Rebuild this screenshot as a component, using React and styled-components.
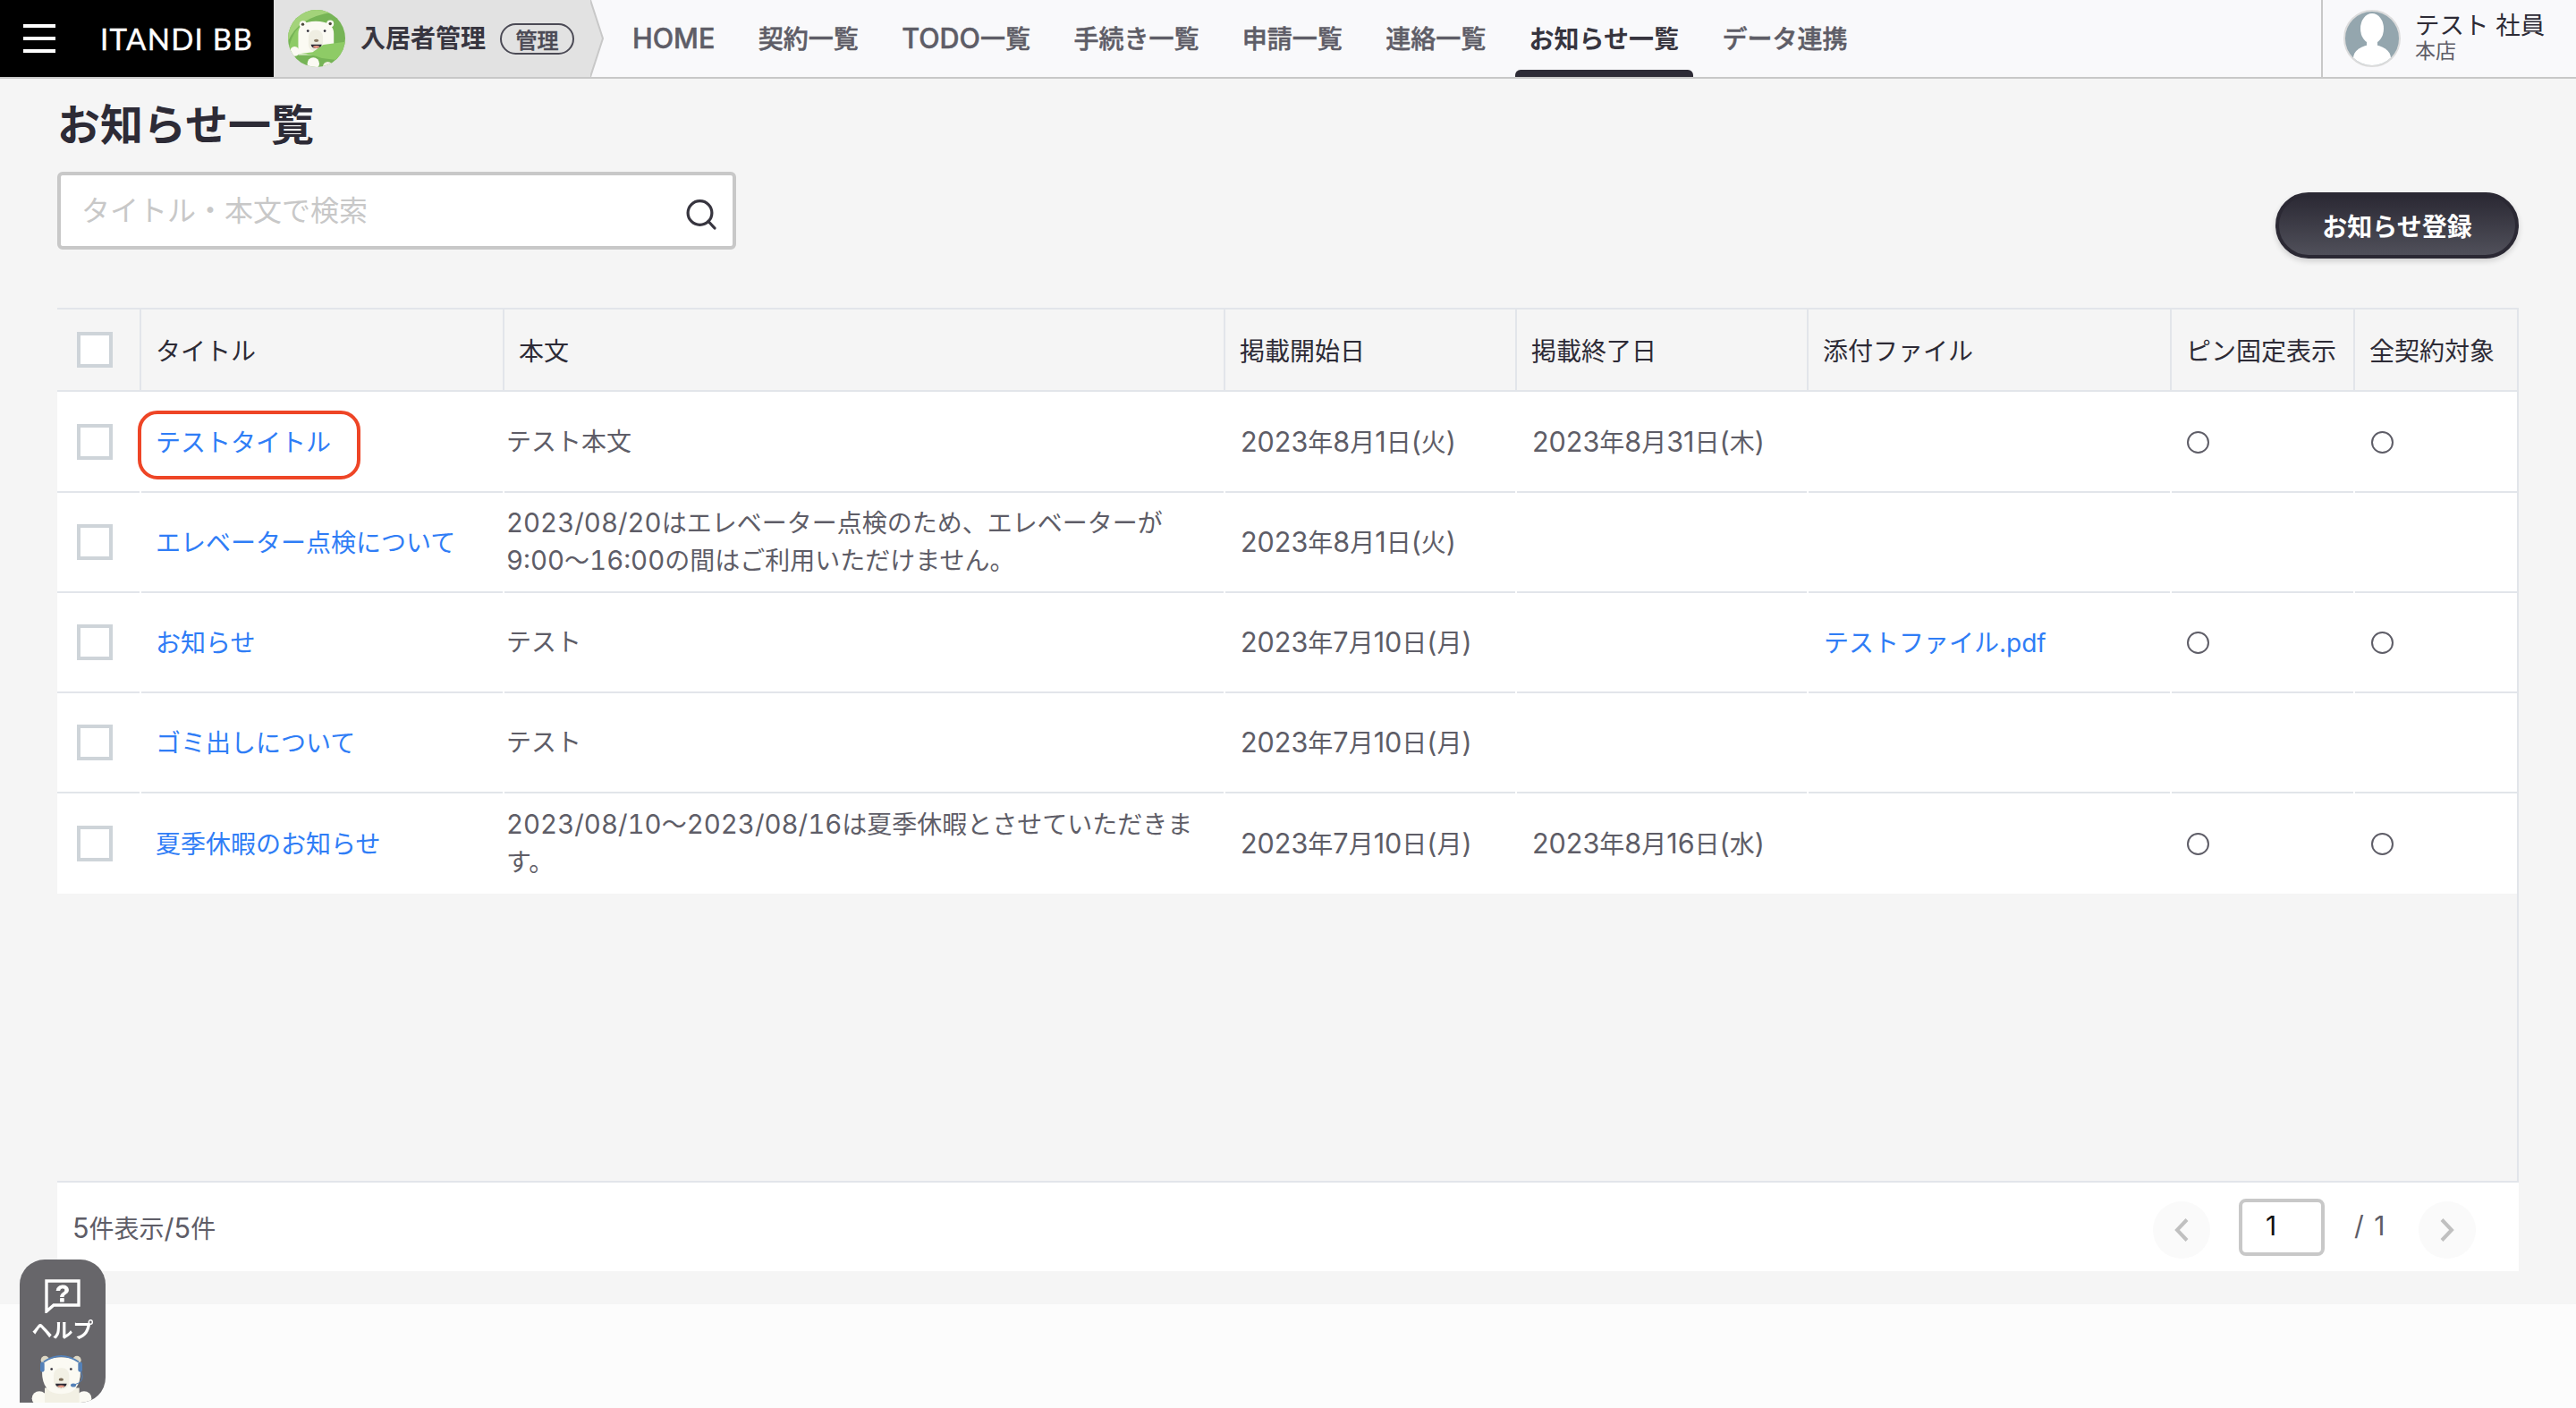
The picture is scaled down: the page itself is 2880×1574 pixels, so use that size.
import React from "react";
import styled, { createGlobalStyle } from "styled-components";

const JP = `"Inter", "Noto Sans CJK JP", "Liberation Sans", sans-serif`;
const LINE = "#e2e5ea";
const TEXT = "#2d2b36";
const SUB = "#5e5d67";
const LINK = "#2f7df6";
const COLUMNS = "92px 404px 804px 324px 324px 404px 203px 181px";

const GlobalStyle = createGlobalStyle`
html, body, #root {
  padding: 0;
  margin: 0;
  box-sizing: border-box;
  height: 100%;
}
body {
  background: #fcfcfc;
  font-family: ${JP};
  color: ${TEXT};
}
`;

const Page = styled.div`
  display: flex;
  flex-direction: column;
  height: 1574px;
  overflow: hidden;
`;

const Header = styled.header`
  display: flex;
  align-items: stretch;
  height: 88px;
  flex: none;
  box-sizing: border-box;
  background: #f9f9fb;
  border-bottom: 2px solid #c8c8c8;
`;

const Brand = styled.div`
  display: flex;
  align-items: center;
  width: 306px;
  background: #000;
  padding-left: 26px;
  box-sizing: border-box;
`;

const Burger = styled.div`
  display: flex;
  flex-direction: column;
  justify-content: space-between;
  width: 36px;
  height: 32px;
  margin-right: 50px;
  span {
    display: block;
    height: 4px;
    background: #fff;
  }
`;

const BrandName = styled.div`
  font-family: "Lato", sans-serif;
  font-weight: 400;
  font-size: 33px;
  letter-spacing: 1.3px;
  -webkit-text-stroke: 0.4px #fff;
  color: #fff;
  white-space: nowrap;
`;

const Product = styled.div`
  display: flex;
  align-items: center;
  width: 354px;
  box-sizing: border-box;
  padding-left: 16px;
  background: #e2e2e2;
`;

const ProductName = styled.div`
  margin-left: 17px;
  font-size: 28px;
  font-weight: 700;
  line-height: 36px;
  color: #37353f;
  white-space: nowrap;
`;

const RoleBadge = styled.div`
  display: flex;
  align-items: center;
  justify-content: center;
  margin-left: 16px;
  width: 83px;
  height: 35px;
  box-sizing: border-box;
  border: 2px solid #4b4a55;
  border-radius: 18px;
  font-size: 24px;
  font-weight: 500;
  -webkit-text-stroke: 0.5px #4b4a55;
  color: #4b4a55;
`;

const Nav = styled.nav`
  display: flex;
  gap: 16.4px;
  margin-left: 15px;
`;

const NavItem = styled.a`
  position: relative;
  display: flex;
  align-items: center;
  padding: 0 16px 2px;
  font-size: 28px;
  font-weight: ${(p) => (p.$active ? 700 : 500)};
  -webkit-text-stroke: ${(p) => (p.$active ? "0" : `0.5px ${SUB}`)};
  color: ${(p) => (p.$active ? "#37353f" : SUB)};
  white-space: nowrap;
  &::after {
    content: "";
    display: ${(p) => (p.$active ? "block" : "none")};
    position: absolute;
    left: 0;
    right: 0;
    bottom: 0;
    height: 8px;
    border-radius: 6px 6px 0 0;
    background: #2d2b36;
  }
`;

const Latin = styled.span`
  font-size: 1.09em;
`;

const Account = styled.div`
  display: flex;
  align-items: center;
  gap: 16px;
  margin-left: auto;
  width: 285px;
  box-sizing: border-box;
  padding-left: 23px;
  border-left: 2px solid #c8c8c8;
`;

const AccountText = styled.div`
  display: flex;
  flex-direction: column;
  margin-top: -4px;
`;

const AccountName = styled.div`
  font-size: 27.5px;
  line-height: 32px;
  color: ${TEXT};
  white-space: pre;
`;

const AccountShop = styled.div`
  font-size: 23px;
  line-height: 26px;
  color: ${SUB};
`;

const Main = styled.main`
  display: flex;
  flex-direction: column;
  height: 1370px;
  flex: none;
  box-sizing: border-box;
  padding: 23px 64px 37px;
  background: #f5f5f5;
`;

const Title = styled.h1`
  margin: 0 0 23px;
  font-size: 48px;
  line-height: 58px;
  font-weight: 700;
  color: ${TEXT};
`;

const Toolbar = styled.div`
  display: flex;
  justify-content: space-between;
  align-items: flex-start;
  height: 97px;
  margin-bottom: 55px;
`;

const SearchBox = styled.div`
  display: flex;
  align-items: center;
  justify-content: space-between;
  width: 759px;
  height: 87px;
  box-sizing: border-box;
  padding: 0 18px 0 23px;
  background: #fff;
  border: 4px solid #c8c8c8;
  border-radius: 6px;
`;

const SearchInput = styled.input`
  flex: 1;
  min-width: 0;
  padding: 0 0 1px;
  border: 0;
  outline: 0;
  background: transparent;
  font-family: ${JP};
  font-size: 32px;
  color: ${TEXT};
  &::placeholder {
    color: #c8c8c8;
    opacity: 1;
  }
`;

const PrimaryButton = styled.button`
  width: 272px;
  height: 74px;
  margin-top: 23px;
  box-sizing: border-box;
  border: 4px solid #2b2934;
  border-radius: 37px;
  background: linear-gradient(#2b2934, #50505a);
  box-shadow: 0 3px 6px rgba(0, 0, 0, 0.16);
  font-family: ${JP};
  font-size: 28px;
  font-weight: 700;
  color: #fff;
`;

const TableArea = styled.div`
  flex: 1;
  box-sizing: border-box;
  border-top: 2px solid ${LINE};
  border-right: 2px solid ${LINE};
`;

const HeadRow = styled.div`
  display: grid;
  grid-template-columns: ${COLUMNS};
  column-gap: 2px;
  height: 92px;
  box-sizing: border-box;
  padding-bottom: 2px;
  background: ${LINE};
`;

const HeadCell = styled.div`
  display: flex;
  align-items: center;
  padding-left: ${(p) => p.$pad ?? 16}px;
  background: #f5f5f5;
  font-size: 28px;
  color: ${TEXT};
  white-space: nowrap;
`;

const TableBody = styled.div`
  padding-top: 1px;
  background: #fff;
`;

const BodyRow = styled.div`
  display: grid;
  grid-template-columns: ${COLUMNS};
  column-gap: 2px;
  height: 112px;
  background: #fff;
`;

const BodyCell = styled.div`
  position: relative;
  display: flex;
  align-items: center;
  box-sizing: border-box;
  padding-left: ${(p) => p.$pad ?? 17}px;
  border-bottom: ${(p) => (p.$last ? "0" : `2px solid ${LINE}`)};
  font-size: 28px;
  line-height: 42px;
  color: ${SUB};
`;

const BodyLine = styled.div`
  font-variant-numeric: tabular-nums;
  white-space: nowrap;
  ${Latin} {
    font-size: 1.05em;
  }
`;

const CheckBox = styled.span`
  display: block;
  width: 40px;
  height: 40px;
  box-sizing: border-box;
  background: #fff;
  border: 4px solid #ced4d9;
`;

const Link = styled.a`
  display: inline-block;
  padding-top: 2px;
  color: ${LINK};
  white-space: nowrap;
`;

const Highlight = styled.div`
  position: absolute;
  left: -4px;
  top: 20px;
  width: 249px;
  height: 77px;
  box-sizing: border-box;
  border: 4px solid #ee4526;
  border-radius: 22px;
  pointer-events: none;
`;

const Radio = styled.span`
  display: block;
  width: 25px;
  height: 25px;
  box-sizing: border-box;
  border: 2px solid ${SUB};
  border-radius: 50%;
`;

const TableFooter = styled.div`
  display: flex;
  align-items: center;
  justify-content: space-between;
  height: 101px;
  flex: none;
  box-sizing: border-box;
  padding: 0 48px 0 17px;
  background: #fff;
  border-top: 2px solid ${LINE};
  font-size: 28px;
  color: ${SUB};
`;

const Pager = styled.div`
  display: flex;
  align-items: center;
`;

const PageButton = styled.button`
  display: flex;
  align-items: center;
  justify-content: center;
  width: 64px;
  height: 64px;
  padding: 0;
  margin-top: 6px;
  border: 0;
  border-radius: 50%;
  background: #fafafa;
`;

const PageInput = styled.div`
  width: 96px;
  height: 64px;
  margin-left: 32px;
  box-sizing: border-box;
  padding-left: 26px;
  border: 4px solid #c8c8c8;
  border-radius: 8px;
  font-size: 30px;
  line-height: 52px;
  color: #111;
`;

const PageTotal = styled.div`
  width: 105px;
  padding: 0 0 4px 33px;
  box-sizing: border-box;
  font-size: 30px;
  word-spacing: 3px;
  white-space: pre;
`;

const HelpTab = styled.div`
  position: fixed;
  left: 22px;
  top: 1408px;
  display: flex;
  flex-direction: column;
  align-items: center;
  width: 96px;
  height: 160px;
  box-sizing: border-box;
  padding-top: 22px;
  overflow: hidden;
  border-radius: 28px 28px 28px 0;
  background: rgba(94, 92, 97, 0.94);
`;

const HelpLabel = styled.div`
  margin-top: 6px;
  font-size: 23px;
  font-weight: 700;
  line-height: 26px;
  color: #fff;
  white-space: nowrap;
`;

const HelpBear = styled.svg`
  margin-top: auto;
  display: block;
  flex: none;
`;

const IconSlot = styled.span`
  display: flex;
  flex: none;
  margin-top: 8px;
`;

// digits and capitals sit larger next to the kana in the reference font
const withLatin = (text) =>
  text.split(/([0-9A-Z/:()]+)/).map((part, i) => (i % 2 ? <Latin key={i}>{part}</Latin> : part));

const AppLogo = () => (
  <svg width="64" height="64" viewBox="38 30 190 190">
    <defs>
      <clipPath id="logo-clip">
        <circle cx="133" cy="125" r="95" />
      </clipPath>
    </defs>
    <g clipPath="url(#logo-clip)">
      <rect x="38" y="30" width="190" height="190" fill="#76b456" />
      <path d="M38 135 Q70 55 185 38 L130 20 L30 60Z" fill="#a3d37a" />
      <path d="M38 170 Q50 100 90 75 L70 170Z" fill="#8ecb66" />
      <path d="M72 110 Q72 68 130 68 Q190 68 190 110 L190 180 L72 180Z" fill="#fbfaf3" />
      <circle cx="88" cy="78" r="12" fill="#fbfaf3" />
      <circle cx="178" cy="76" r="12" fill="#fbfaf3" />
      <circle cx="87" cy="78" r="5" fill="#4c4a3c" />
      <circle cx="178" cy="76" r="5" fill="#4c4a3c" />
      <circle cx="104" cy="100" r="4" fill="#2d2b36" />
      <circle cx="160" cy="100" r="4" fill="#2d2b36" />
      <rect x="106" y="97" width="48" height="70" rx="22" fill="#efeee2" />
      <ellipse cx="132" cy="132" rx="8" ry="5" fill="#8a7b66" />
      <path d="M114 145 H150 Q148 158 132 158 Q116 158 114 145Z" fill="#2d2b36" />
      <path d="M120 152 Q132 146 144 152 Q140 158 132 158 Q124 158 120 152Z" fill="#e89a86" />
      <path d="M155 146 L228 136 L228 200 L150 190 Q100 172 62 178 L120 170Z" fill="#8ecb66" />
      <circle cx="60" cy="168" r="16" fill="#fbfaf3" />
      <circle cx="122" cy="208" r="20" fill="#fbfaf3" />
      <circle cx="170" cy="218" r="16" fill="#efeee2" />
    </g>
  </svg>
);

const ProductArrow = () => (
  <svg width="16" height="86" viewBox="0 0 16 86" style={{ flex: "none" }}>
    <polygon points="0,0 14,43 0,86" fill="#e2e2e2" />
    <polyline points="0,0 14,43 0,86" fill="none" stroke="#c8c8c8" strokeWidth="2" />
  </svg>
);

const Avatar = () => (
  <svg width="64" height="64" viewBox="0 0 64 64">
    <defs>
      <clipPath id="avatar-clip">
        <circle cx="32" cy="32" r="30" />
      </clipPath>
    </defs>
    <circle cx="32" cy="32" r="31" fill="#94a6ae" stroke="#dcdcdc" strokeWidth="2" />
    <g clipPath="url(#avatar-clip)" fill="#fff">
      <ellipse cx="32" cy="21" rx="13" ry="17" />
      <rect x="26" y="30" width="12" height="14" />
      <ellipse cx="32" cy="54" rx="21" ry="15" />
    </g>
  </svg>
);

const SearchIcon = () => (
  <IconSlot>
    <svg width="34" height="34" viewBox="0 0 34 34" fill="none" stroke="#37353f" strokeWidth="3.2">
      <circle cx="15.5" cy="15" r="13.4" />
      <path d="M25 24.5 L32 32" strokeLinecap="round" />
    </svg>
  </IconSlot>
);

const Chevron = ({ left }) => (
  <svg width="16" height="26" viewBox="0 0 16 26" fill="none" stroke="#c0c0c0" strokeWidth="4">
    <polyline points={left ? "14,1.5 3,13 14,24.5" : "2,1.5 13,13 2,24.5"} />
  </svg>
);

const HelpIcon = () => (
  <svg width="40" height="38" viewBox="0 0 40 38" style={{ flex: "none" }}>
    <path d="M2 2 H38 V29 H10 L2 36 Z" fill="none" stroke="#fff" strokeWidth="3.4" />
    <text
      x="20"
      y="25"
      textAnchor="middle"
      fontFamily={`"Liberation Sans", sans-serif`}
      fontWeight="700"
      fontSize="26"
      stroke="#fff"
      strokeWidth="0.8"
      fill="#fff"
    >
      ?
    </text>
  </svg>
);

const Bear = () => (
  <HelpBear width="96" height="55" viewBox="66 640 288 164">
    <ellipse cx="132" cy="790" rx="25" ry="24" fill="#fbfaf3" />
    <ellipse cx="282" cy="790" rx="25" ry="24" fill="#fbfaf3" />
    <rect x="150" y="755" width="116" height="60" fill="#f2f0e4" />
    <circle cx="151" cy="662" r="14" fill="#dfd9c5" />
    <circle cx="258" cy="662" r="14" fill="#dfd9c5" />
    <path d="M141 700 Q141 652 205 652 Q270 652 270 700 Q270 775 205 775 Q141 775 141 700Z" fill="#fbfaf3" />
    <path d="M146 668 Q205 628 264 668" fill="none" stroke="#5481b8" strokeWidth="5" />
    <rect x="135" y="668" width="14" height="34" rx="7" fill="#5481b8" />
    <rect x="262" y="668" width="14" height="34" rx="7" fill="#5481b8" />
    <path d="M272 700 Q288 735 248 745" fill="none" stroke="#5481b8" strokeWidth="3" />
    <ellipse cx="246" cy="746" rx="9" ry="6" fill="#5481b8" />
    <circle cx="173" cy="692" r="4" fill="#2d2b36" />
    <circle cx="238" cy="692" r="4" fill="#2d2b36" />
    <rect x="180" y="688" width="52" height="72" rx="24" fill="#f2f0e4" />
    <ellipse cx="205" cy="727" rx="8" ry="5" fill="#7a6a55" />
    <path d="M186 741 H224 Q222 754 205 754 Q188 754 186 741Z" fill="#2d2b36" />
    <path d="M192 749 Q205 743 218 749 Q213 754 205 754 Q197 754 192 749Z" fill="#e89a86" />
  </HelpBear>
);

const NAV_ITEMS = ["HOME", "契約一覧", "TODO一覧", "手続き一覧", "申請一覧", "連絡一覧", "お知らせ一覧", "データ連携"];

const HEADS = ["タイトル", "本文", "掲載開始日", "掲載終了日", "添付ファイル", "ピン固定表示", "全契約対象"];

const ROWS = [
  { title: "テストタイトル", body: ["テスト本文"], start: "2023年8月1日(火)", end: "2023年8月31日(木)", flags: true, marked: true },
  {
    title: "エレベーター点検について",
    body: ["2023/08/20はエレベーター点検のため、エレベーターが", "9:00〜16:00の間はご利用いただけません。"],
    start: "2023年8月1日(火)",
  },
  { title: "お知らせ", body: ["テスト"], start: "2023年7月10日(月)", file: "テストファイル.pdf", flags: true },
  { title: "ゴミ出しについて", body: ["テスト"], start: "2023年7月10日(月)" },
  {
    title: "夏季休暇のお知らせ",
    body: ["2023/08/10〜2023/08/16は夏季休暇とさせていただきま", "す。"],
    start: "2023年7月10日(月)",
    end: "2023年8月16日(水)",
    flags: true,
  },
];

const App = () => {
  return (
    <Page>
      <GlobalStyle />
      <Header>
        <Brand>
          <Burger>
            <span />
            <span />
            <span />
          </Burger>
          <BrandName>ITANDI BB</BrandName>
        </Brand>
        <Product>
          <AppLogo />
          <ProductName>入居者管理</ProductName>
          <RoleBadge>管理</RoleBadge>
        </Product>
        <ProductArrow />
        <Nav>
          {NAV_ITEMS.map((item) => (
            <NavItem key={item} $active={item === "お知らせ一覧"}>
              <span>{withLatin(item)}</span>
            </NavItem>
          ))}
        </Nav>
        <Account>
          <Avatar />
          <AccountText>
            <AccountName>テスト 社員</AccountName>
            <AccountShop>本店</AccountShop>
          </AccountText>
        </Account>
      </Header>
      <Main>
        <Title>お知らせ一覧</Title>
        <Toolbar>
          <SearchBox>
            <SearchInput placeholder="タイトル・本文で検索" />
            <SearchIcon />
          </SearchBox>
          <PrimaryButton>お知らせ登録</PrimaryButton>
        </Toolbar>
        <TableArea>
          <HeadRow>
            <HeadCell $pad={22}>
              <CheckBox />
            </HeadCell>
            {HEADS.map((head) => (
              <HeadCell key={head}>{head}</HeadCell>
            ))}
          </HeadRow>
          <TableBody>
            {ROWS.map((row, i) => {
              const last = i === ROWS.length - 1;
              return (
                <BodyRow key={row.title}>
                  <BodyCell $pad={22} $last={last}>
                    <CheckBox />
                  </BodyCell>
                  <BodyCell $pad={16} $last={last}>
                    <Link>{row.title}</Link>
                    {row.marked && <Highlight />}
                  </BodyCell>
                  <BodyCell $pad={2} $last={last}>
                    <div>
                      {row.body.map((line) => (
                        <BodyLine key={line}>{withLatin(line)}</BodyLine>
                      ))}
                    </div>
                  </BodyCell>
                  <BodyCell $last={last}>
                    <span>{withLatin(row.start)}</span>
                  </BodyCell>
                  <BodyCell $last={last}>{row.end && <span>{withLatin(row.end)}</span>}</BodyCell>
                  <BodyCell $last={last}>{row.file && <Link>{row.file}</Link>}</BodyCell>
                  <BodyCell $last={last}>{row.flags && <Radio />}</BodyCell>
                  <BodyCell $pad={18} $last={last}>
                    {row.flags && <Radio />}
                  </BodyCell>
                </BodyRow>
              );
            })}
          </TableBody>
        </TableArea>
        <TableFooter>
          <span>{withLatin("5件表示/5件")}</span>
          <Pager>
            <PageButton>
              <Chevron left />
            </PageButton>
            <PageInput>1</PageInput>
            <PageTotal>/ 1</PageTotal>
            <PageButton>
              <Chevron />
            </PageButton>
          </Pager>
        </TableFooter>
      </Main>
      <HelpTab>
        <HelpIcon />
        <HelpLabel>ヘルプ</HelpLabel>
        <Bear />
      </HelpTab>
    </Page>
  );
};

export default App;
